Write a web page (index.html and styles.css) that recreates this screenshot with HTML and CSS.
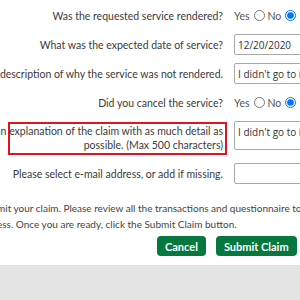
FILE: index.html
```html
<!DOCTYPE html>
<html lang="en">
<head>
    <meta charset="UTF-8">
    <meta name="viewport" content="width=device-width, initial-scale=1.0">
    <title>Submit Claim</title>
    <link rel="stylesheet" href="styles.css">
</head>
<body>
    <div class="page">
        <form class="claim-form">
            <label class="field-label">Was the requested service rendered?</label>
            <div class="choice">
                <label>Yes <input type="radio" name="rendered" value="yes"></label>
                <label>No <input type="radio" name="rendered" value="no" checked></label>
            </div>

            <label class="field-label" for="service-date">What was the expected date of service?</label>
            <input class="text-input" type="text" id="service-date" value="12/20/2020">

            <label class="field-label" for="not-rendered">Please provide a description of why the service was not rendered.</label>
            <input class="text-input" type="text" id="not-rendered" value="I didn't go to it because the provider closed.">

            <label class="field-label">Did you cancel the service?</label>
            <div class="choice">
                <label>Yes <input type="radio" name="cancelled" value="yes"></label>
                <label>No <input type="radio" name="cancelled" value="no" checked></label>
            </div>

            <label class="field-label highlight" for="explanation">Please provide an explanation of the claim with as much detail as<br>possible. (Max 500 characters)</label>
            <textarea class="text-input text-area" id="explanation" maxlength="500">I didn't go to it because the provider closed.</textarea>

            <label class="field-label" for="email">Please select e-mail address, or add if missing.</label>
            <input class="text-input" type="text" id="email">
        </form>

        <div class="note">
            <div class="note-line"><span class="note-cut">You are ready to sub</span><span>mit your claim. Please review all the transactions and questionnaire to make sure</span></div>
            <div class="note-line"><span class="note-cut">everything is correct before you finish the proc</span><span>ess. Once you are ready, click the Submit Claim button.</span></div>
        </div>

        <div class="actions">
            <button type="button" class="btn">Cancel</button>
            <button type="button" class="btn">Submit Claim</button>
        </div>
    </div>

    <div class="footer-band"></div>
</body>
</html>
```

FILE: styles.css
```css
body {
    margin: 0;
    font-family: Lato, "Open Sans", sans-serif;
    color: #3b3b3b;
    background-color: #fff;
    overflow: hidden;
}
.page {
    width: 760px;
    margin-left: -197px;
}
.claim-form {
    display: grid;
    grid-template-columns: 420px 1fr;
    column-gap: 11px;
    row-gap: 8px;
    align-items: center;
    padding-top: 5px;
}
.field-label {
    font-size: 10.5px;
    line-height: 14px;
    text-align: right;
    white-space: nowrap;
}
.field-label.highlight {
    position: relative;
    padding: 3px 0;
}
.field-label.highlight::after {
    content: "";
    position: absolute;
    top: 1px;
    bottom: 0;
    left: 205px;
    right: -4px;
    border: 2px solid #e2131c;
}
.choice {
    display: flex;
    align-items: center;
    height: 21px;
    font-size: 10.5px;
    color: #555;
}
.choice label {
    display: flex;
    align-items: center;
}
.choice input {
    width: 11px;
    height: 11px;
    margin: 0 3px 0 4px;
}
.text-input {
    box-sizing: border-box;
    width: 320px;
    height: 21px;
    padding: 1px 3px;
    border: 1px solid #a9a9a9;
    border-radius: 2px;
    font-family: "Open Sans", sans-serif;
    font-size: 10px;
    color: #333;
}
.text-area {
    align-self: start;
    height: 29px;
    padding-top: 3px;
    resize: none;
    overflow: hidden;
    line-height: 14px;
}
.note {
    margin-top: 16px;
    margin-left: 197px;
    font-size: 10px;
    line-height: 16px;
    color: #444;
}
.note-line {
    display: flex;
    white-space: nowrap;
}
.note-cut {
    flex: none;
    width: 0;
    min-width: 0;
    display: flex;
    justify-content: flex-end;
    margin-left: -3px;
}
.actions {
    display: flex;
    gap: 10px;
    margin-top: 4px;
    margin-left: 354px;
}
.btn {
    height: 20px;
    padding: 0 8px;
    border: none;
    border-radius: 4px;
    background-color: #06773e;
    color: #fff;
    font-family: Lato, sans-serif;
    font-size: 11px;
    font-weight: bold;
    cursor: pointer;
}
.footer-band {
    height: 60px;
    margin-top: 9px;
    background-color: #e4e4e4;
}
```
